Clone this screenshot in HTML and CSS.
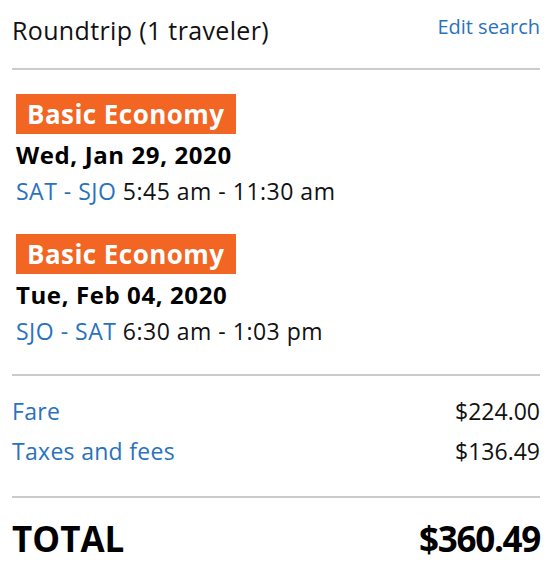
FILE: index.html
```html
<!DOCTYPE html>
<html lang="en">
<head>
<meta charset="utf-8">
<title>Trip summary</title>
<link rel="stylesheet" href="styles.css">
</head>
<body>
<div class="summary">
  <header class="head">
    <span class="trip-type">Roundtrip (1 traveler)</span>
    <a class="edit" href="#">Edit search</a>
  </header>
  <section class="flights">
    <div class="flight">
      <span class="badge">Basic Economy</span>
      <div class="date">Wed, Jan 29, 2020</div>
      <div class="route"><a class="link" href="#">SAT - SJO</a> 5:45 am - 11:30 am</div>
    </div>
    <div class="flight">
      <span class="badge">Basic Economy</span>
      <div class="date">Tue, Feb 04, 2020</div>
      <div class="route"><a class="link" href="#">SJO - SAT</a> 6:30 am - 1:03 pm</div>
    </div>
  </section>
  <section class="costs">
    <div class="row"><a class="link label" href="#">Fare</a><span>$224.00</span></div>
    <div class="row"><a class="link label" href="#">Taxes and fees</a><span>$136.49</span></div>
  </section>
  <div class="total"><span>TOTAL</span><span class="amount">$360.49</span></div>
</div>
</body>
</html>
```
FILE: styles.css
```css
* { box-sizing: border-box; }
html, body { margin: 0; padding: 0; background: #fff; }
body {
  font-family: "Open Sans", "Noto Sans", sans-serif;
  color: #111;
}
.summary {
  width: 528px;
  margin-left: 12px;
}
.head {
  display: flex;
  justify-content: space-between;
  align-items: baseline;
  padding-top: 10px;
  height: 70px;
  border-bottom: 2px solid #cbcbcb;
}
.trip-type { font-size: 25px; line-height: 40px; letter-spacing: 0.35px; }
.edit {
  font-size: 20px;
  color: #2a72bd;
  text-decoration: none;
  position: relative;
  top: -6px;
}
.link { color: #2a72bd; text-decoration: none; }
.flights {
  padding: 24px 0 27px 4px;
  border-bottom: 2px solid #cbcbcb;
  display: flex;
  flex-direction: column;
  gap: 27px;
}
.flight { display: flex; flex-direction: column; align-items: flex-start; }
.badge {
  display: block;
  background: #f26522;
  color: #fff;
  font-weight: 700;
  font-size: 26px;
  letter-spacing: 0.45px;
  line-height: 40px;
  height: 40px;
  padding: 0 11px;
}
.date { font-weight: 700; font-size: 24px; line-height: 42px; letter-spacing: 0.6px; color: #000; }
.route { font-size: 23px; line-height: 31px; letter-spacing: 0.5px; }
.costs {
  padding: 15px 0 25px 0;
  border-bottom: 2px solid #cbcbcb;
}
.row {
  display: flex;
  justify-content: space-between;
  font-size: 23px;
  line-height: 40px;
}
.label { letter-spacing: 0.3px; }
.total {
  display: flex;
  justify-content: space-between;
  font-weight: 700;
  font-size: 35px;
  line-height: 50px;
  padding-top: 16px;
  color: #000;
}
.amount { letter-spacing: -1.3px; }
```
